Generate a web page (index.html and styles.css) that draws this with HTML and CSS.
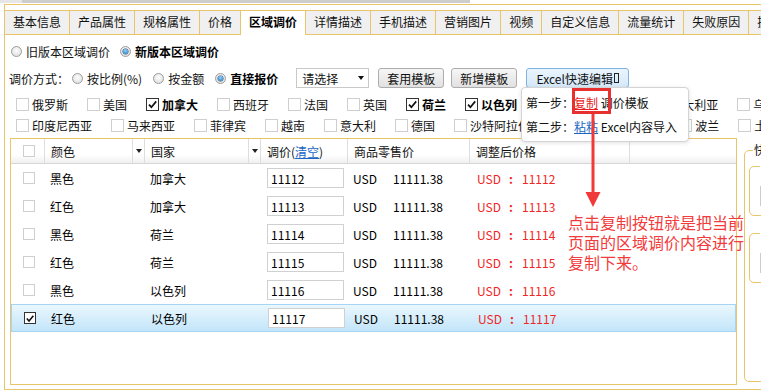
FILE: index.html
```html
<!DOCTYPE html>
<html lang="zh-CN">
<head>
    <meta charset="UTF-8">
    <title>区域调价</title>
    <link rel="stylesheet" href="styles.css">
</head>
<body>
    <div class="scrollbar"><span class="scroll-btn"></span><span class="scroll-thumb"></span></div>

    <div class="panel">
        <ul class="tabs">
            <li class="tab">基本信息</li>
            <li class="tab">产品属性</li>
            <li class="tab">规格属性</li>
            <li class="tab">价格</li>
            <li class="tab active">区域调价</li>
            <li class="tab">详情描述</li>
            <li class="tab">手机描述</li>
            <li class="tab">营销图片</li>
            <li class="tab">视频</li>
            <li class="tab">自定义信息</li>
            <li class="tab">流量统计</li>
            <li class="tab">失败原因</li>
            <li class="tab">操作日志</li>
        </ul>

        <div class="mode-row">
            <label class="opt"><span class="radio"></span>旧版本区域调价</label>
            <label class="opt strong"><span class="radio on"></span>新版本区域调价</label>
        </div>

        <div class="method-row">
            <span class="caption">调价方式：</span>
            <label class="opt"><span class="radio"></span>按比例(%)</label>
            <label class="opt"><span class="radio"></span>按金额</label>
            <label class="opt strong last"><span class="radio on"></span>直接报价</label>
            <div class="select"><span>请选择</span><span class="select-arrow"></span></div>
            <button class="btn">套用模板</button>
            <button class="btn">新增模板</button>
            <button class="btn btn-excel">Excel快速编辑<span class="tofu"></span></button>
        </div>

        <div class="countries">
            <div class="country-row">
                <label class="country"><span class="cb"></span>俄罗斯</label>
                <label class="country"><span class="cb"></span>美国</label>
                <label class="country checked"><span class="cb"><svg viewBox="0 0 11 11"><path d="M2 5.6 L4.4 8.2 L9.2 2.4"/></svg></span>加拿大</label>
                <label class="country"><span class="cb"></span>西班牙</label>
                <label class="country"><span class="cb"></span>法国</label>
                <label class="country"><span class="cb"></span>英国</label>
                <label class="country checked"><span class="cb"><svg viewBox="0 0 11 11"><path d="M2 5.6 L4.4 8.2 L9.2 2.4"/></svg></span>荷兰</label>
                <label class="country checked"><span class="cb"><svg viewBox="0 0 11 11"><path d="M2 5.6 L4.4 8.2 L9.2 2.4"/></svg></span>以色列</label>
                <label class="country"><span class="cb"></span>泰国</label>
                <label class="country"><span class="cb"></span>韩国</label>
                <label class="country"><span class="cb"></span>澳大利亚</label>
                <label class="country"><span class="cb"></span>乌克兰</label>
            </div>
            <div class="country-row">
                <label class="country"><span class="cb"></span>印度尼西亚</label>
                <label class="country"><span class="cb"></span>马来西亚</label>
                <label class="country"><span class="cb"></span>菲律宾</label>
                <label class="country"><span class="cb"></span>越南</label>
                <label class="country"><span class="cb"></span>意大利</label>
                <label class="country"><span class="cb"></span>德国</label>
                <label class="country"><span class="cb"></span>沙特阿拉伯</label>
                <label class="country"><span class="cb"></span>阿联酋</label>
                <label class="country"><span class="cb"></span>日本</label>
                <label class="country"><span class="cb"></span>波兰</label>
                <label class="country"><span class="cb"></span>土耳其</label>
            </div>
        </div>

        <div class="main">
            <div class="grid-box">
                <div class="grid-head">
                    <div class="hcell c-chk"><span class="cb small"></span></div>
                    <div class="hcell c-color">颜色<span class="filter"></span></div>
                    <div class="hcell c-country">国家<span class="filter"></span></div>
                    <div class="hcell c-price">调价(<a class="link">清空</a>)</div>
                    <div class="hcell c-retail">商品零售价</div>
                    <div class="hcell c-adjust">调整后价格</div>
                    <div class="hcell c-rest"></div>
                </div>

                <div class="grid-row">
                    <div class="cell c-chk"><span class="cb small"></span></div>
                    <div class="cell c-color">黑色</div>
                    <div class="cell c-country">加拿大</div>
                    <div class="cell c-price"><input class="price-input" value="11112"></div>
                    <div class="cell c-retail"><span class="cur">USD</span>11111.38</div>
                    <div class="cell c-adjust red"><span class="usd">USD</span><span class="sep">:</span>11112</div>
                </div>
                <div class="grid-row">
                    <div class="cell c-chk"><span class="cb small"></span></div>
                    <div class="cell c-color">红色</div>
                    <div class="cell c-country">加拿大</div>
                    <div class="cell c-price"><input class="price-input" value="11113"></div>
                    <div class="cell c-retail"><span class="cur">USD</span>11111.38</div>
                    <div class="cell c-adjust red"><span class="usd">USD</span><span class="sep">:</span>11113</div>
                </div>
                <div class="grid-row">
                    <div class="cell c-chk"><span class="cb small"></span></div>
                    <div class="cell c-color">黑色</div>
                    <div class="cell c-country">荷兰</div>
                    <div class="cell c-price"><input class="price-input" value="11114"></div>
                    <div class="cell c-retail"><span class="cur">USD</span>11111.38</div>
                    <div class="cell c-adjust red"><span class="usd">USD</span><span class="sep">:</span>11114</div>
                </div>
                <div class="grid-row">
                    <div class="cell c-chk"><span class="cb small"></span></div>
                    <div class="cell c-color">红色</div>
                    <div class="cell c-country">荷兰</div>
                    <div class="cell c-price"><input class="price-input" value="11115"></div>
                    <div class="cell c-retail"><span class="cur">USD</span>11111.38</div>
                    <div class="cell c-adjust red"><span class="usd">USD</span><span class="sep">:</span>11115</div>
                </div>
                <div class="grid-row">
                    <div class="cell c-chk"><span class="cb small"></span></div>
                    <div class="cell c-color">黑色</div>
                    <div class="cell c-country">以色列</div>
                    <div class="cell c-price"><input class="price-input" value="11116"></div>
                    <div class="cell c-retail"><span class="cur">USD</span>11111.38</div>
                    <div class="cell c-adjust red"><span class="usd">USD</span><span class="sep">:</span>11116</div>
                </div>
                <div class="grid-row selected">
                    <div class="cell c-chk"><span class="cb small on"><svg viewBox="0 0 11 11"><path d="M2 5.6 L4.4 8.2 L9.2 2.4"/></svg></span></div>
                    <div class="cell c-color">红色</div>
                    <div class="cell c-country">以色列</div>
                    <div class="cell c-price"><input class="price-input" value="11117"></div>
                    <div class="cell c-retail"><span class="cur">USD</span>11111.38</div>
                    <div class="cell c-adjust red"><span class="usd">USD</span><span class="sep">:</span>11117</div>
                </div>
            </div>

            <div class="side">
                <fieldset class="group">
                    <legend>快速调价</legend>
                    <fieldset class="sub">
                        <legend>目标价格</legend>
                        <input class="sub-input">
                    </fieldset>
                    <fieldset class="sub">
                        <legend>截止时间</legend>
                        <input class="sub-input">
                    </fieldset>
                </fieldset>
            </div>
        </div>
    </div>

    <!-- Excel 快速编辑 弹出层 -->
    <div class="excel-pop">
        <p>第一步：<a class="link red-link">复制</a> 调价模板</p>
        <p>第二步：<a class="link">粘粘</a> Excel内容导入</p>
    </div>

    <!-- 标注 -->
    <div class="mark-box"></div>
    <svg class="mark-arrow" width="16" height="94" viewBox="0 0 16 94">
        <line x1="8" y1="0" x2="8" y2="79" stroke="#f03a3a" stroke-width="3"/>
        <polygon points="0.5,78 15.5,78 8,93" fill="#f03a3a"/>
    </svg>
    <div class="mark-note">点击复制按钮就是把当前<br>页面的区域调价内容进行<br>复制下来。</div>
</body>
</html>
```

FILE: styles.css
```css
* {
    box-sizing: border-box;
}
html, body {
    margin: 0;
    overflow: hidden;
}
body {
    position: relative;
    width: 761px;
    height: 392px;
    font-family: "Noto Sans CJK SC", "Microsoft YaHei", sans-serif;
    font-size: 12px;
    color: #111;
    background: #fff;
}
p {
    margin: 0;
}

/* top scrollbar */
.scrollbar {
    display: flex;
    height: 3px;
    margin-bottom: 1px;
}
.scroll-btn {
    width: 22px;
    background: #e6e6e6;
}
.scroll-thumb {
    width: 448px;
    background: #cdcdcd;
}

.panel {
    width: 820px;
    height: 386px;
    margin-left: 4px;
    border: 1px solid #e8c46a;
    border-right: none;
}

/* tabs */
.tabs {
    display: flex;
    align-items: flex-start;
    list-style: none;
    margin: 5px 0 0;
    padding: 0;
    height: 25px;
    border-bottom: 1px solid #e8c46a;
}
.tab {
    height: 24px;
    line-height: 22px;
    padding: 0 8px;
    background: #f0f0f0;
    border-top: 1px solid #e8c46a;
    border-right: 1px solid #e8c46a;
    white-space: nowrap;
}
.tab.active {
    height: 25px;
    background: #fff;
    font-weight: bold;
    color: #000;
}

/* radio rows */
.mode-row {
    display: flex;
    align-items: center;
    height: 33px;
    padding-left: 6px;
}
.method-row {
    display: flex;
    align-items: center;
    height: 20px;
    padding-left: 4px;
}
.caption {
    margin-right: 3px;
}
.opt {
    display: inline-flex;
    align-items: center;
    margin-right: 10px;
    white-space: nowrap;
}
.method-row .opt {
    margin-right: 11px;
}
.method-row .opt.last {
    margin-right: 18px;
}
.opt.strong {
    font-weight: bold;
    color: #000;
}
.radio {
    position: relative;
    width: 11px;
    height: 11px;
    margin-right: 4px;
    border: 1px solid #9c9c9c;
    border-radius: 50%;
    background: radial-gradient(circle at 50% 40%, #fdfdfd, #d9d9d9);
}
.radio.on::after {
    content: "";
    position: absolute;
    left: 2px;
    top: 2px;
    width: 5px;
    height: 5px;
    border-radius: 50%;
    background: radial-gradient(circle at 50% 35%, #8fd3ff, #1b6fb2);
    box-shadow: 0 0 0 0.5px #21557f;
}

.select {
    display: flex;
    align-items: center;
    justify-content: space-between;
    width: 73px;
    height: 20px;
    padding: 0 4px 0 5px;
    border: 1px solid #c9c9c9;
    background: #fff;
}
.select-arrow {
    width: 0;
    height: 0;
    border-left: 3px solid transparent;
    border-right: 3px solid transparent;
    border-top: 4px solid #111;
}
.btn {
    height: 20px;
    margin-left: 7px;
    padding: 0 8px;
    font: inherit;
    line-height: 17px;
    color: #111;
    border: 1px solid #adadad;
    border-radius: 3px;
    background: linear-gradient(#f6f6f6, #e1e1e1);
}
.method-row .select + .btn {
    margin-left: 9px;
}
.btn-excel {
    display: inline-flex;
    align-items: center;
    justify-content: center;
    width: 103px;
    margin-left: 9px;
    border-color: #7fb3e4;
    background: linear-gradient(#eaf4fd, #d5e9fa);
}
.tofu {
    display: inline-block;
    width: 5px;
    height: 10px;
    margin-left: 1px;
    border: 1px solid #222;
}

/* countries */
.countries {
    margin-top: 6px;
    padding-left: 11px;
    white-space: nowrap;
    overflow: hidden;
}
.country-row {
    display: flex;
    align-items: center;
    height: 21px;
}
.country {
    display: inline-flex;
    align-items: center;
    flex-shrink: 0;
    margin-right: 19px;
}
.country.checked {
    font-weight: bold;
    color: #000;
}
.cb {
    display: inline-flex;
    align-items: center;
    justify-content: center;
    flex-shrink: 0;
    width: 13px;
    height: 13px;
    margin-right: 3px;
    border: 1px solid #cfcfcf;
    background: #fff;
}
.cb svg {
    width: 11px;
    height: 11px;
}
.cb path {
    fill: none;
    stroke: #111;
    stroke-width: 1.7;
}
.country.checked .cb,
.cb.on {
    border-color: #333;
}
.cb.small {
    width: 12px;
    height: 12px;
    margin-right: 0;
}

/* grid */
.main {
    display: flex;
    align-items: flex-start;
    margin: 2px 0 0 5px;
}
.grid-box {
    flex-shrink: 0;
    width: 727px;
    height: 247px;
    border: 1px solid #e8c46a;
}
.grid-head {
    display: flex;
    height: 25px;
    border-bottom: 1px solid #d6d6d6;
    background: linear-gradient(#fff 65%, #f0f0f0);
}
.hcell {
    display: flex;
    align-items: center;
    height: 100%;
    padding-left: 6px;
    border-right: 1px solid #dedede;
    white-space: nowrap;
}
.cell {
    display: flex;
    align-items: center;
    height: 100%;
    padding-left: 5px;
    white-space: nowrap;
    color: #000;
}
.c-chk { width: 34px; padding-left: 12px; }
.c-color { width: 100px; }
.c-country { width: 116px; }
.c-price { width: 87px; }
.c-retail { width: 122px; }
.c-adjust { width: 160px; }
.c-rest { flex: 1; border-right: none; }
.cell.c-price {
    padding-left: 6px;
}
.cell.c-adjust {
    padding-left: 7px;
}
.filter {
    display: flex;
    align-items: center;
    justify-content: center;
    width: 12px;
    height: 100%;
    margin-left: auto;
    border-left: 1px solid #dedede;
}
.filter::before {
    content: "";
    border-left: 3px solid transparent;
    border-right: 3px solid transparent;
    border-top: 4px solid #222;
}
.link {
    color: #1a66c4;
    text-decoration: underline;
    cursor: pointer;
}
.grid-row {
    display: flex;
    align-items: center;
    height: 28px;
}
.grid-row.selected {
    border: 1px solid #a6d5f4;
    background: linear-gradient(#eaf7fe, #c3e5f9);
}
.price-input {
    width: 77px;
    height: 20px;
    padding: 0 3px;
    font: inherit;
    color: #000;
    border: 1px solid #d0d0d0;
    outline: none;
}
.cur {
    display: inline-block;
    width: 40px;
}
.usd {
    display: inline-block;
    width: 32px;
}
.sep {
    display: inline-block;
    width: 13px;
    font-weight: bold;
}
.red {
    color: #f02626;
}

/* right side */
.side {
    flex-shrink: 0;
    width: 200px;
    margin-left: 7px;
    padding-top: 4px;
}
.group {
    height: 240px;
    margin: 0;
    padding: 0 0 0 4px;
    border: 1px solid #e8c46a;
    border-radius: 5px;
}
.group > legend {
    margin-left: 4px;
    padding: 0 1px;
    line-height: 16px;
}
.sub {
    height: 58px;
    margin: 0 0 9px;
    padding: 0 0 0 10px;
    border: 1px solid #e8c46a;
    border-radius: 5px;
}
.sub legend {
    padding: 0 1px;
    line-height: 16px;
}
.sub-input {
    display: block;
    width: 150px;
    height: 20px;
    margin-top: 12px;
    border: 1px solid #cccccc;
}

/* popup */
.excel-pop {
    position: absolute;
    left: 521px;
    top: 87px;
    width: 168px;
    height: 55px;
    padding: 3px 0 0 4px;
    background: #fff;
    border: 1px solid #d4d4d4;
    border-radius: 4px;
    box-shadow: 0 1px 4px rgba(0,0,0,0.12);
    line-height: 24px;
    white-space: nowrap;
}
.red-link {
    color: #e81c1c;
}

/* annotation */
.mark-box {
    position: absolute;
    left: 572px;
    top: 88px;
    width: 39px;
    height: 26px;
    border: 3px solid #e8312f;
}
.mark-arrow {
    position: absolute;
    left: 585px;
    top: 114px;
}
.mark-note {
    position: absolute;
    left: 568px;
    top: 212px;
    font-size: 16px;
    line-height: 20px;
    color: #f23b3b;
    white-space: nowrap;
}
```
